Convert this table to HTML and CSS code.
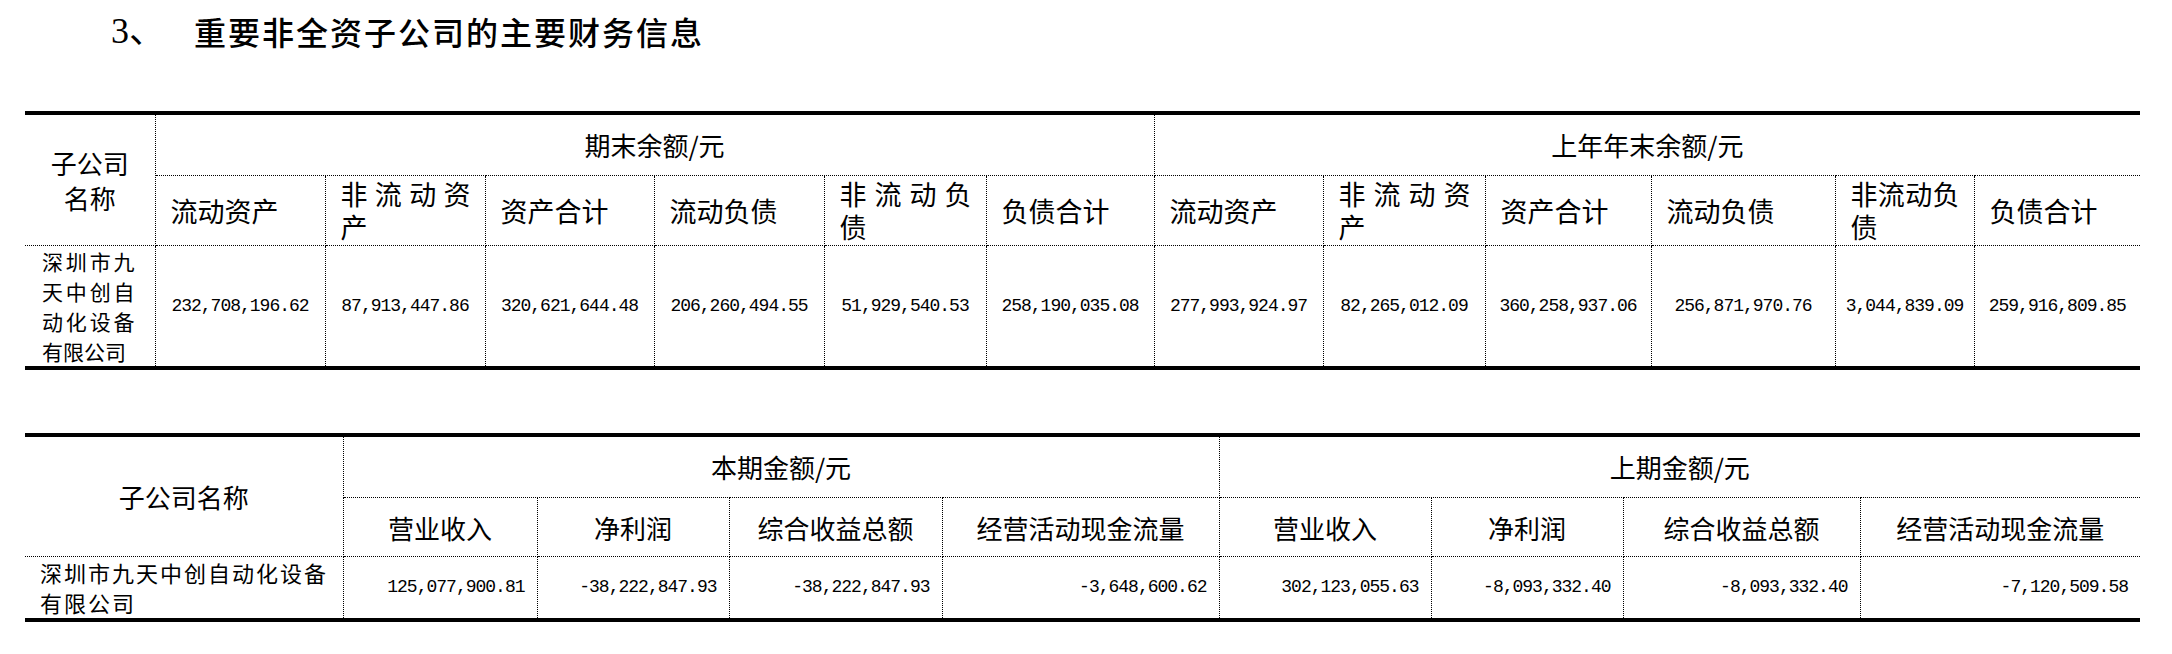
FILE: index.html
```html
<!DOCTYPE html>
<html lang="zh-CN">
<head>
<meta charset="utf-8">
<link rel="stylesheet" href="styles.css">
</head>
<body>
<h3 class="title"><span class="num">3、</span><span class="ttext">重要非全资子公司的主要财务信息</span></h3>

<table class="t1">
  <colgroup>
    <col style="width:130px"><col style="width:170px"><col style="width:160px"><col style="width:169px"><col style="width:170px"><col style="width:162px"><col style="width:168px"><col style="width:169px"><col style="width:162px"><col style="width:166px"><col style="width:184px"><col style="width:139px"><col style="width:166px">
  </colgroup>
  <tr class="r1">
    <th rowspan="2" class="name-h">子公司<br>名称</th>
    <th colspan="6" class="grp">期末余额/元</th>
    <th colspan="6" class="grp">上年年末余额/元</th>
  </tr>
  <tr class="r2">
    <th class="lab">流动资产</th>
    <th class="lab">非流动资产</th>
    <th class="lab">资产合计</th>
    <th class="lab">流动负债</th>
    <th class="lab">非流动负债</th>
    <th class="lab">负债合计</th>
    <th class="lab">流动资产</th>
    <th class="lab">非流动资产</th>
    <th class="lab">资产合计</th>
    <th class="lab">流动负债</th>
    <th class="lab">非流动负债</th>
    <th class="lab">负债合计</th>
  </tr>
  <tr class="r3">
    <td class="name">深圳市九天中创自动化设备有限公司</td>
    <td class="n">232,708,196.62</td>
    <td class="n">87,913,447.86</td>
    <td class="n">320,621,644.48</td>
    <td class="n">206,260,494.55</td>
    <td class="n">51,929,540.53</td>
    <td class="n">258,190,035.08</td>
    <td class="n">277,993,924.97</td>
    <td class="n">82,265,012.09</td>
    <td class="n">360,258,937.06</td>
    <td class="n">256,871,970.76</td>
    <td class="n">3,044,839.09</td>
    <td class="n">259,916,809.85</td>
  </tr>
</table>

<table class="t2">
  <colgroup>
    <col style="width:318px"><col style="width:194px"><col style="width:192px"><col style="width:213px"><col style="width:277px"><col style="width:212px"><col style="width:192px"><col style="width:237px"><col style="width:280px">
  </colgroup>
  <tr class="s1">
    <th rowspan="2" class="name-h2">子公司名称</th>
    <th colspan="4" class="grp">本期金额/元</th>
    <th colspan="4" class="grp">上期金额/元</th>
  </tr>
  <tr class="s2">
    <th class="lab2">营业收入</th>
    <th class="lab2">净利润</th>
    <th class="lab2">综合收益总额</th>
    <th class="lab2">经营活动现金流量</th>
    <th class="lab2">营业收入</th>
    <th class="lab2">净利润</th>
    <th class="lab2">综合收益总额</th>
    <th class="lab2">经营活动现金流量</th>
  </tr>
  <tr class="s3">
    <td class="name2">深圳市九天中创自动化设备有限公司</td>
    <td class="nr">125,077,900.81</td>
    <td class="nr">-38,222,847.93</td>
    <td class="nr">-38,222,847.93</td>
    <td class="nr">-3,648,600.62</td>
    <td class="nr">302,123,055.63</td>
    <td class="nr">-8,093,332.40</td>
    <td class="nr">-8,093,332.40</td>
    <td class="nr">-7,120,509.58</td>
  </tr>
</table>
</body>
</html>
```

FILE: styles.css
```css
html, body {
  margin: 0;
  padding: 0;
  background: #fff;
  color: #000;
}
body {
  width: 2172px;
  height: 654px;
  overflow: hidden;
  font-family: "Noto Sans CJK SC", "Noto Sans", sans-serif;
}
.title {
  margin: 0;
  padding: 8px 0 0 111px;
  height: 111px;
  box-sizing: border-box;
  font-size: 32px;
  font-weight: 500;
  line-height: 46px;
  display: flex;
}
.title .num {
  width: 83px;
  font-family: "Liberation Serif", "Noto Sans CJK SC", serif;
  font-size: 36px;
  font-weight: 400;
}
.title .ttext {
  letter-spacing: 2px;
}
table {
  border-collapse: collapse;
  table-layout: fixed;
  margin-left: 25px;
  width: 2115px;
}
th, td {
  padding: 0;
  border: 1px dotted #000;
  font-weight: 400;
  vertical-align: middle;
}
tr:first-child th {
  border-top: 4px solid #000;
}
tr:last-child td {
  border-bottom: 4px solid #000;
}
tr > :first-child {
  border-left: none;
}
tr > :last-child {
  border-right: none;
}
.t1 .r1 { height: 62px; }
.t1 .r2 { height: 70px; }
.t1 .r3 { height: 121px; }
.name-h {
  font-size: 26px;
  line-height: 35px;
  text-align: center;
}
.grp {
  font-size: 26px;
  text-align: center;
}
.lab {
  font-size: 27px;
  line-height: 33px;
  text-align: justify;
  text-align-last: left;
  padding: 0 14px 0 15px;
}
.name {
  font-size: 21px;
  line-height: 30px;
  text-align: justify;
  padding: 0 20px 0 17px;
}
.n, .nr {
  font-family: "Liberation Mono", monospace;
  font-size: 18px;
  letter-spacing: -1px;
  text-align: center;
}
.t2 {
  margin-top: 63px;
}
.t2 .s1 { height: 63px; }
.t2 .s2 { height: 59px; }
.t2 .s3 { height: 63px; }
.name-h2 {
  font-size: 26px;
  text-align: center;
}
.lab2 {
  font-size: 26px;
  text-align: center;
}
.name2 {
  font-size: 22px;
  line-height: 30px;
  letter-spacing: 2px;
  padding: 0 6px 0 15px;
  text-align: left;
}
.nr {
  text-align: right;
  padding-right: 12px;
}
```
